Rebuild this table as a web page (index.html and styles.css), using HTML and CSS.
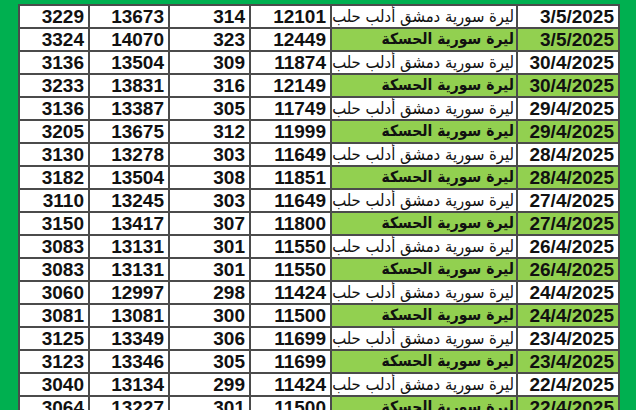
FILE: index.html
```html
<!DOCTYPE html>
<html lang="ar">
<head>
<meta charset="utf-8">
<link rel="stylesheet" href="styles.css">
</head>
<body>
<div class="frame">
<table class="rates" dir="rtl">
<colgroup>
<col class="c-date"><col class="c-place"><col class="c-n4"><col class="c-n3"><col class="c-n2"><col class="c-n1">
</colgroup>
<tbody>
<tr><td class="date">3/5/2025</td><td class="place">ليرة سورية دمشق أدلب حلب</td><td class="num">12101</td><td class="num">314</td><td class="num">13673</td><td class="num">3229</td></tr>
<tr class="hs"><td class="date">3/5/2025</td><td class="place">ليرة سورية الحسكة</td><td class="num">12449</td><td class="num">323</td><td class="num">14070</td><td class="num">3324</td></tr>
<tr><td class="date">30/4/2025</td><td class="place">ليرة سورية دمشق أدلب حلب</td><td class="num">11874</td><td class="num">309</td><td class="num">13504</td><td class="num">3136</td></tr>
<tr class="hs"><td class="date">30/4/2025</td><td class="place">ليرة سورية الحسكة</td><td class="num">12149</td><td class="num">316</td><td class="num">13831</td><td class="num">3233</td></tr>
<tr><td class="date">29/4/2025</td><td class="place">ليرة سورية دمشق أدلب حلب</td><td class="num">11749</td><td class="num">305</td><td class="num">13387</td><td class="num">3136</td></tr>
<tr class="hs"><td class="date">29/4/2025</td><td class="place">ليرة سورية الحسكة</td><td class="num">11999</td><td class="num">312</td><td class="num">13675</td><td class="num">3205</td></tr>
<tr><td class="date">28/4/2025</td><td class="place">ليرة سورية دمشق أدلب حلب</td><td class="num">11649</td><td class="num">303</td><td class="num">13278</td><td class="num">3130</td></tr>
<tr class="hs"><td class="date">28/4/2025</td><td class="place">ليرة سورية الحسكة</td><td class="num">11851</td><td class="num">308</td><td class="num">13504</td><td class="num">3182</td></tr>
<tr><td class="date">27/4/2025</td><td class="place">ليرة سورية دمشق أدلب حلب</td><td class="num">11649</td><td class="num">303</td><td class="num">13245</td><td class="num">3110</td></tr>
<tr class="hs"><td class="date">27/4/2025</td><td class="place">ليرة سورية الحسكة</td><td class="num">11800</td><td class="num">307</td><td class="num">13417</td><td class="num">3150</td></tr>
<tr><td class="date">26/4/2025</td><td class="place">ليرة سورية دمشق أدلب حلب</td><td class="num">11550</td><td class="num">301</td><td class="num">13131</td><td class="num">3083</td></tr>
<tr class="hs"><td class="date">26/4/2025</td><td class="place">ليرة سورية الحسكة</td><td class="num">11550</td><td class="num">301</td><td class="num">13131</td><td class="num">3083</td></tr>
<tr><td class="date">24/4/2025</td><td class="place">ليرة سورية دمشق أدلب حلب</td><td class="num">11424</td><td class="num">298</td><td class="num">12997</td><td class="num">3060</td></tr>
<tr class="hs"><td class="date">24/4/2025</td><td class="place">ليرة سورية الحسكة</td><td class="num">11500</td><td class="num">300</td><td class="num">13081</td><td class="num">3081</td></tr>
<tr><td class="date">23/4/2025</td><td class="place">ليرة سورية دمشق أدلب حلب</td><td class="num">11699</td><td class="num">306</td><td class="num">13349</td><td class="num">3125</td></tr>
<tr class="hs"><td class="date">23/4/2025</td><td class="place">ليرة سورية الحسكة</td><td class="num">11699</td><td class="num">305</td><td class="num">13346</td><td class="num">3123</td></tr>
<tr><td class="date">22/4/2025</td><td class="place">ليرة سورية دمشق أدلب حلب</td><td class="num">11424</td><td class="num">299</td><td class="num">13134</td><td class="num">3040</td></tr>
<tr class="hs"><td class="date">22/4/2025</td><td class="place">ليرة سورية الحسكة</td><td class="num">11500</td><td class="num">301</td><td class="num">13227</td><td class="num">3064</td></tr>
</tbody>
</table>
</div>
</body>
</html>
```
FILE: styles.css
```css
html, body {
  margin: 0;
  padding: 0;
  background: #00b050;
  overflow: hidden;
}
.frame {
  padding: 4px 0 0 18px;
  width: 600px;
}
.rates {
  border-collapse: collapse;
  table-layout: fixed;
  width: 600px;
  background: #ffffff;
  font-family: "Liberation Sans", Arial, sans-serif;
  font-weight: bold;
  font-size: 19px;
  color: #111;
}
.c-date { width: 102px; }
.c-place { width: 186px; }
.c-n4 { width: 81px; }
.c-n3 { width: 81px; }
.c-n2 { width: 80px; }
.c-n1 { width: 70px; }
.rates td {
  border: 2px solid #4b4b4b;
  height: 21px;
  padding: 0 4px;
  line-height: 21px;
  white-space: nowrap;
  overflow: hidden;
  text-align: left;
  direction: ltr;
}
.rates td.num, .rates td.date {
  text-align: right;
}
.rates td.place {
  direction: rtl;
  text-align: right;
  padding: 0 2px;
  font-family: "DejaVu Sans Condensed", "DejaVu Sans", sans-serif;
  font-weight: normal;
  font-size: 16.5px;
}
.rates tr.hs td.place {
  font-weight: bold;
  font-size: 15.5px;
}
.rates tr.hs td.date,
.rates tr.hs td.place {
  background: #92d050;
}
```
